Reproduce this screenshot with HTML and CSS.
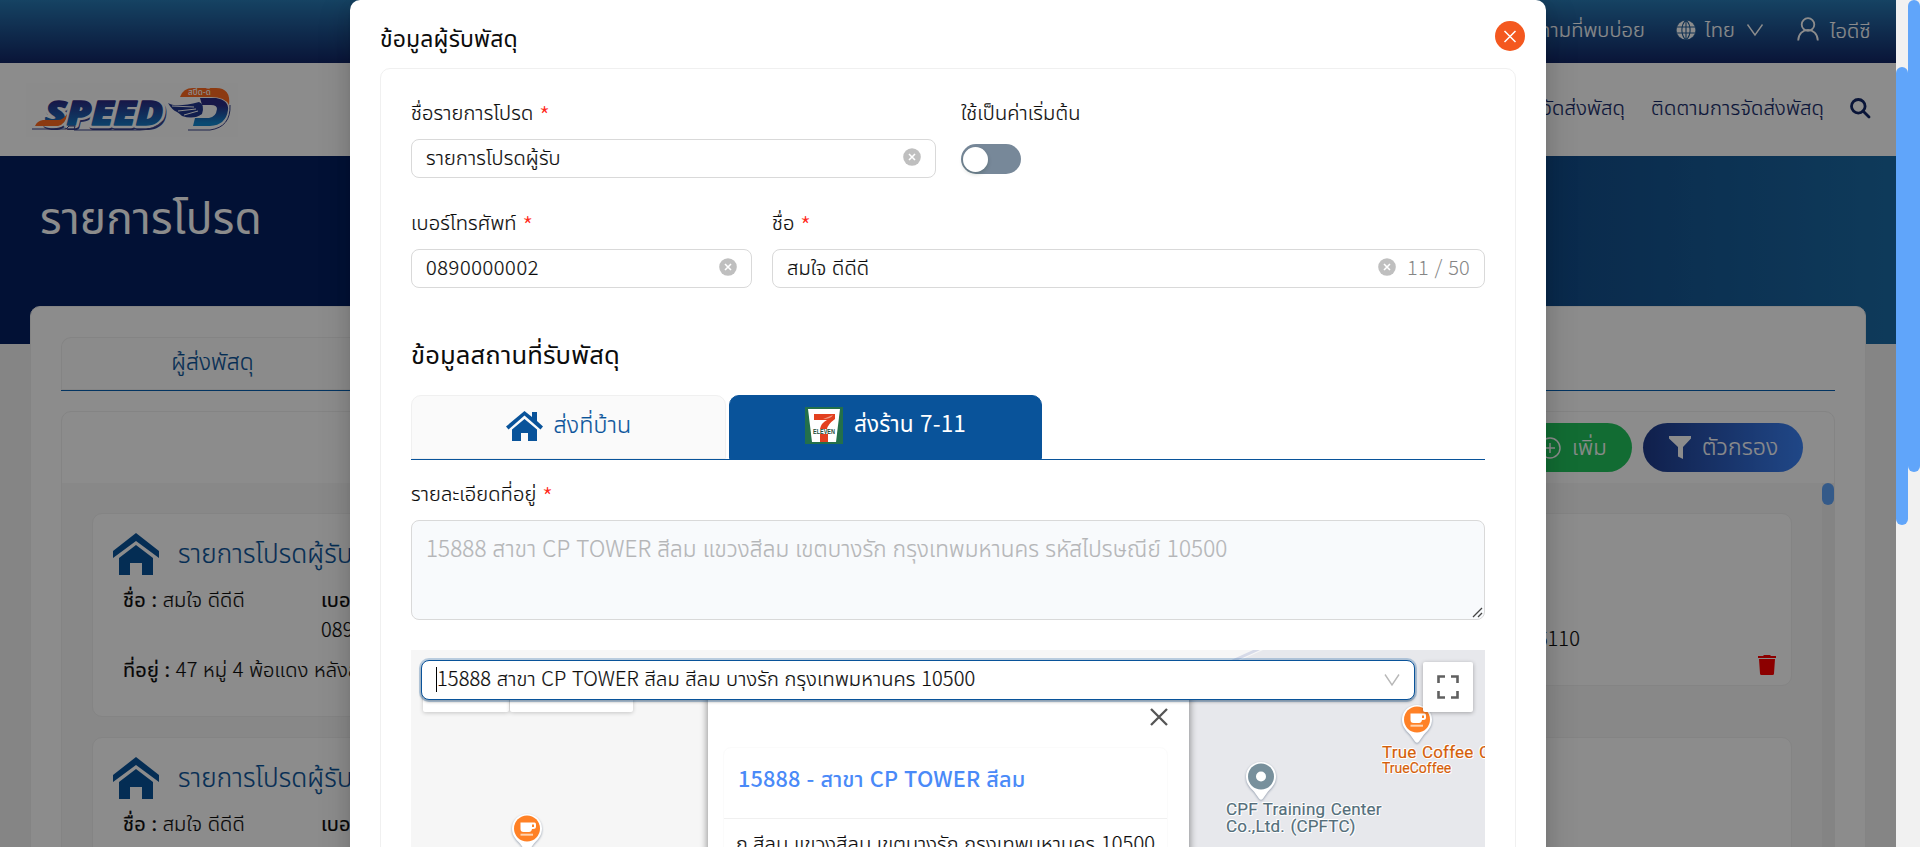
FILE: index.html
```
<!DOCTYPE html>
<html lang="th">
<head>
<meta charset="utf-8">
<title>รายการโปรด</title>
<link rel="stylesheet" href="styles.css">
</head>
<body>
<svg class="defs" aria-hidden="true">
  <defs>
    <linearGradient id="brand" x1="0" y1="0" x2="0" y2="1"><stop offset="0.25" stop-color="#2b2a83"/><stop offset="0.9" stop-color="#1287cf"/></linearGradient>
    <symbol id="home" viewBox="0 0 46 42"><path d="M23 0 46 18v7L23 8 0 25v-7z"/><path d="M23 12 40 25v17H29V30H17v12H6V25z"/></symbol>
    <symbol id="clear" viewBox="0 0 18 18"><circle cx="9" cy="9" r="8.8" fill="#bfbfbf"/><path d="m6 6 6 6M12 6l-6 6" stroke="#fff" stroke-width="1.6"/></symbol>
    <symbol id="pin" viewBox="0 0 32 42"><path d="M16 1C7.500 1 1 7.500 1 15.500 1 22 4.500 26 9 30.500l5 7q2 2.500 4 0l5-7C27.500 26 31 22 31 15.500 31 7.500 24.500 1 16 1z" fill="#fff"/></symbol>
    <symbol id="cup" viewBox="0 0 32 42"><use href="#pin"/><circle cx="16" cy="15.500" r="13" fill="#ff8126"/><path d="M9.500 9.500h14q1.500 0 1.500 2v2q0 2.500-3 2.500h-1q-.5 3-3 3h-5.500q-3 0-3-3z" fill="#fff"/><path d="M21 11.500h2v2.500h-2z" fill="#ff8126"/><path d="M9.500 20.700h12.500v2h-12.500z" fill="#ffd3b0"/></symbol>
  </defs>
</svg>

<div class="viewport">
  <div class="page">
    <div class="topbar">
      <span class="faq">คำถามที่พบบ่อย</span>
      <svg class="globe" viewBox="0 0 20 20"><circle cx="10" cy="10" r="10"/><path d="M0 7h20M0 13h20M10 0v20M10 0C4.500 5 4.500 15 10 20M10 0c5.500 5 5.500 15 0 20"/></svg>
      <span class="lang">ไทย</span>
      <svg class="chev" viewBox="0 0 16 12"><path d="m.5.5 7.500 10.500L15.500.5"/></svg>
      <svg class="user" viewBox="0 0 22 24"><circle cx="11" cy="7.500" r="6.300"/><path d="M1.200 23.500C1.500 9.500 20.500 9.500 20.800 23.500"/></svg>
      <span class="username">ไอดีซี</span>
    </div>
    <div class="header">
      <svg class="logo" viewBox="0 0 212 54">
        <rect width="212" height="54" fill="#fdfdfd"/>
        <g class="logo-text">
          <text x="20" y="43.500" textLength="118" lengthAdjust="spacingAndGlyphs" stroke="#37408a" stroke-width="6" fill="#37408a">SPEED</text>
          <text x="19" y="42" textLength="118" lengthAdjust="spacingAndGlyphs" stroke="#fff" stroke-width="6.500" fill="#fff">SPEED</text>
          <text x="19" y="42" textLength="118" lengthAdjust="spacingAndGlyphs" stroke="url(#brand)" stroke-width="1.500" fill="url(#brand)">SPEED</text>
        </g>
        <path d="M9 43q2-5 8-6h15q5 0 9-6-1 10-9 12z" fill="#ff6a1f"/>
        <path d="M6 46h34l3-3h6l-1 4h66q14 0 23-9" fill="none" stroke="#37408a" stroke-width="1"/>
        <path d="M154 14q3-9 13-9h23q15 0 13 17-4-8-18-8z" fill="#ff6a1f"/>
        <path d="M174 15h16q13 2 12 12-2 15-18 16h-17l2-8h14q7-1 8-9 0-4-6-4h-9z" fill="url(#brand)"/>
        <path d="M204 22q1 22-20 25h-22" fill="none" stroke="#37408a" stroke-width="1"/>
        <path d="M142 20q8 5 31-1 6 2 3 12-8 6-20 2-2-2-5-4-5-2-9-9z" fill="#22388f"/>
        <path d="m146 23 22 1M152 28l18-2M158 32l14-4" stroke="#fff" stroke-width="1"/>
        <text class="logo-sub" x="162" y="12">สปีด-ดี</text>
      </svg>
      <div class="nav"><span>บริการจัดส่งพัสดุ</span><span class="nav-track">ติดตามการจัดส่งพัสดุ</span>
        <svg class="search" viewBox="0 0 20 20"><circle cx="8.300" cy="8.300" r="6.800"/><path d="m13 13 6 6"/></svg></div>
    </div>
    <div class="banner"><h1>รายการโปรด</h1></div>
    <div class="panel">
      <div class="page-tabs"><div class="page-tab">ผู้ส่งพัสดุ</div></div>
      <div class="list">
        <div class="list-head">
          <div class="btn add"><svg class="plus" viewBox="0 0 22 22"><circle cx="11" cy="11" r="10"/><path d="M11 6v10M6 11h10"/></svg><span>เพิ่ม</span></div>
          <div class="btn filter"><svg class="funnel" viewBox="0 0 22 23"><path d="M0 0h22v2.500L14 11v12L9 20.500V11L0 2.500z"/></svg><span>ตัวกรอง</span></div>
        </div>
        <div class="list-body">
          <div class="cards">
            <div class="card tall">
              <div class="card-title"><svg><use href="#home"/></svg><span>รายการโปรดผู้รับ</span></div>
              <div class="card-row"><div><b>ชื่อ :</b> สมใจ ดีดีดี</div><div class="phone"><b>เบอร์โทรศัพท์ :</b><br>0890000001</div></div>
              <div class="card-address"><b>ที่อยู่ :</b> 47 หมู่ 4 พ้อแดง หลังสวน ชุมพร</div>
            </div>
            <div class="card side"><div class="zip">ชุมพร 86110</div>
              <svg class="trash" viewBox="0 0 18 20"><path d="M6 0h6l1 1h5v2H0V1h5zM1 4h16l-1 14.500q0 1.500-1.500 1.500h-11Q2 20 2 18.500z"/></svg></div>
            <div class="card next">
              <div class="card-title"><svg><use href="#home"/></svg><span>รายการโปรดผู้รับ</span></div>
              <div class="card-row"><div><b>ชื่อ :</b> สมใจ ดีดีดี</div><div class="phone"><b>เบอร์โทรศัพท์ :</b></div></div>
            </div>
            <div class="card next"></div>
          </div>
          <div class="mini-track"><div class="mini-thumb"></div></div>
        </div>
      </div>
    </div>
  </div>
  <div class="track modal-track"><div class="thumb"></div></div>
  <div class="track page-track"><div class="thumb"></div></div>

  <div class="mask">
    <div class="modal">
      <div class="modal-head"><h2>ข้อมูลผู้รับพัสดุ</h2>
        <svg class="close" viewBox="0 0 30 30"><circle cx="15" cy="15" r="15" fill="#f4581f"/><path d="m9.500 10 11 11M20.500 10l-11 11" stroke="#fff" stroke-width="1.500"/></svg></div>
      <div class="form">
        <div class="row first">
          <div class="field w-fav"><label>ชื่อรายการโปรด <i>*</i></label><div class="input"><span>รายการโปรดผู้รับ</span><svg class="clear"><use href="#clear"/></svg></div></div>
          <div class="field"><label>ใช้เป็นค่าเริ่มต้น</label><div class="switch"><div class="knob"></div></div></div>
        </div>
        <div class="row second">
          <div class="field w-phone"><label>เบอร์โทรศัพท์ <i>*</i></label><div class="input"><span class="digits">0890000002</span><svg class="clear"><use href="#clear"/></svg></div></div>
          <div class="field grow"><label>ชื่อ <i>*</i></label><div class="input"><span>สมใจ ดีดีดี</span><svg class="clear"><use href="#clear"/></svg><em>11 / 50</em></div></div>
        </div>
        <h3>ข้อมูลสถานที่รับพัสดุ</h3>
        <div class="tabs">
          <div class="tab"><svg class="tab-home" viewBox="0 0 37 30"><path d="M18.500 0 26 6V1h5v9l6 5.500-2.500 3L18.500 4.500 2.500 18.500 0 15.500z"/><path d="M18.500 8 31 18.500V30h-9v-8h-7v8H6V18.500z"/></svg><span>ส่งที่บ้าน</span></div>
          <div class="tab active">
            <svg class="seven" viewBox="0 0 38 37"><path fill="#23704a" d="M0 0h38v37H0z"/><path fill="#fff" d="M3 2h32l-4 33H7z"/><path fill="#e2401f" d="M9 7h21v5q-7 5-8 10h-7q1-6 7-9H9zM15 27h8v8h-8z"/><path fill="#f0a08c" d="M18 12q8 0 10-4"/><text x="8" y="26.500" textLength="22" lengthAdjust="spacingAndGlyphs">ELEVEN</text></svg>
            <span>ส่งร้าน 7-11</span></div>
        </div>
        <label class="addr-label">รายละเอียดที่อยู่ <i>*</i></label>
        <div class="textarea"><span>15888 สาขา CP TOWER สีลม แขวงสีลม เขตบางรัก กรุงเทพมหานคร รหัสไปรษณีย์ 10500</span>
          <svg class="grip" viewBox="0 0 10 10"><path d="M1 10 10 1M6 10l4-4"/></svg></div>
        <div class="map">
          <svg class="ground" viewBox="0 0 1074 197"><path d="M740 50 852 0h222v197H740z" fill="#e7e8ec"/><path d="M738 49 848-1" stroke="#d6dae8" stroke-width="3"/></svg>
          <div class="map-type"><span></span><span></span></div>
          <svg class="marker m1"><use href="#cup"/></svg>
          <svg class="marker m2"><use href="#cup"/></svg>
          <svg class="marker m3" viewBox="0 0 32 42"><use href="#pin"/><circle cx="16" cy="15.500" r="13" fill="#78909c"/><circle cx="16" cy="15.500" r="5" fill="#fff"/></svg>
          <div class="place coffee">True Coffee CP<small>TrueCoffee</small></div>
          <div class="place cpf">CPF Training Center<br>Co.,Ltd. (CPFTC)</div>
          <div class="info">
            <svg class="info-close" viewBox="0 0 18 18"><path d="m1 1 16 16M17 1 1 17"/></svg>
            <div class="info-card"><div class="info-title">15888 - สาขา CP TOWER สีลม</div><div class="info-text">ถ.สีลม แขวงสีลม เขตบางรัก กรุงเทพมหานคร 10500</div></div>
          </div>
          <div class="select"><span>15888 สาขา CP TOWER สีลม สีลม บางรัก กรุงเทพมหานคร 10500</span><svg viewBox="0 0 16 12"><path d="m1 .5 7 10.500L15 .5"/></svg></div>
          <div class="full"><svg viewBox="0 0 22 24"><path d="M1.500 8V1.500H8M14 1.500h6.500V8M20.500 16v6.500H14M8 22.500H1.500V16"/></svg></div>
        </div>
      </div>
    </div>
  </div>
</div>
</body>
</html>
```
FILE: styles.css
```
* { box-sizing: border-box; }
body { margin: 0; font-family: "Noto Sans CJK TC", "Noto Sans Thai", "Noto Sans", sans-serif; font-weight: 300; font-size: 20px; line-height: 30px; letter-spacing: .14px; word-spacing: 1px; color: #0c0c0c; -webkit-text-stroke: .2px; }
h1, h2, h3 { margin: 0; font-weight: 400; -webkit-text-stroke: 0; }
b { font-weight: 400; }
svg { display: block; flex: none; overflow: visible; }
.defs { position: absolute; width: 0; height: 0; }
.viewport { position: relative; width: 1920px; height: 847px; overflow: hidden; display: grid; grid-template-columns: 1896px 12px 12px; }

.page { height: 847px; overflow: hidden; background: #f2f2f2; }
.topbar { height: 63px; padding: 0 25px 4px 0; display: flex; align-items: center; justify-content: flex-end; color: #fff; background: linear-gradient(#287ab4, #122666); }
.faq { padding-bottom: 2px; white-space: nowrap; }
.globe { width: 20px; height: 20px; margin-left: 31px; fill: #fff; stroke: #1e5b96; stroke-width: 1.1; overflow: hidden; border-radius: 50%; }
.lang { width: 30px; margin: 0 0 2px 9px; white-space: nowrap; }
.chev { width: 16px; height: 12px; margin-left: 12px; fill: none; stroke: #fff; stroke-width: 1.4; }
.user { width: 22px; height: 24px; margin: 0 0 1px 34px; fill: none; stroke: #fff; stroke-width: 1.8; }
.username { width: 41px; margin: 0 0 0 11px; white-space: nowrap; }
.header { height: 93px; padding: 20px 25px 0 26px; display: flex; justify-content: space-between; background: #fff; }
.logo { width: 212px; height: 54px; -webkit-text-stroke: initial; }
.logo-text { font: italic 900 34px "Noto Sans", sans-serif; letter-spacing: 0; stroke-linejoin: round; }
.logo-sub { font: 500 8px "Noto Sans Thai", sans-serif; fill: #fff; }
.nav { height: 48px; display: flex; align-items: center; color: #122666; font-size: 20.2px; white-space: nowrap; }
.nav-track { margin-left: 26px; }
.search { width: 20px; height: 20px; margin: 1px 1px 0 26px; fill: none; stroke: #122666; stroke-width: 2.8; stroke-linecap: round; }
.banner { height: 188px; padding: 24px 40px; color: #fff; background: linear-gradient(90deg, #051f62 55%, #1b6ba5); }
.banner h1 { font-size: 44.2px; line-height: 70px; }
.panel { position: relative; width: 1836px; height: 600px; margin: -38px 0 0 30px; padding: 30px; border: 1px solid #f0f0f0; border-radius: 10px; background: #fff; }
.page-tabs { height: 54px; border-bottom: 1px solid #065fb1; }
.page-tab { width: 302px; height: 53px; padding-top: 8px; border: 1px solid #f0f0f0; border-right: 0; border-radius: 10px 0 0 0; text-align: center; color: #09539a; font-size: 22.7px; background: #fdfdfd; }
.list { height: 500px; margin-top: 20px; border: 1px solid #f0f0f0; border-radius: 10px; overflow: hidden; }
.list-head { height: 71px; padding: 11px 31px 0; display: flex; justify-content: flex-end; gap: 11px; }
.btn { height: 49px; display: flex; align-items: center; border-radius: 25px; color: #fff; font-size: 22px; white-space: nowrap; }
.btn span { padding-bottom: 6px; }
.add { width: 121px; padding-left: 28px; gap: 11px; background: #22c55e; }
.filter { width: 160px; padding-left: 26px; gap: 11px; background: linear-gradient(90deg, #1e3a8a, #3b82f6); }
.filter span { font-size: 23px; }
.plus { width: 22px; height: 22px; fill: none; stroke: #fff; stroke-width: 1.5; }
.funnel { width: 22px; height: 23px; fill: #fff; }
.list-body { height: 430px; display: flex; justify-content: space-between; background: #f8f8f8; }
.mini-track { width: 12px; background: #f1f1f1; }
.mini-thumb { height: 22px; border-radius: 6px; background: #60a5fa; }
.cards { width: 1700px; margin: 30px 0 0 30px; display: grid; grid-template-columns: 840px 840px; column-gap: 20px; grid-template-rows: 204px 204px; row-gap: 20px; align-items: start; }
.card { height: 204px; border: 1px solid #f0f0f0; border-radius: 10px; background: #fff; padding: 18px 20px 0; }
.side { height: 173px; position: relative; }
.zip { position: absolute; right: 211px; top: 109px; }
.trash { position: absolute; right: 15px; top: 141px; width: 18px; height: 20px; fill: #f00; }
.card-title { height: 43px; display: flex; align-items: center; gap: 19px; color: #09539a; font-size: 26px; }
.card-title svg { width: 46px; height: 42px; fill: #09539a; }
.card-title span { padding-bottom: 4px; }
.card-row { display: flex; padding: 9px 0 0 10px; }
.card-row > div:first-child { width: 198px; }
.phone { white-space: nowrap; }
.card-address { padding: 10px 0 0 10px; }

.track { background: #f1f1f1; }
.thumb { background: #60a5fa; border-radius: 6px; }
.modal-track { padding-top: 67px; }
.modal-track .thumb { height: 458px; }
.page-track .thumb { height: 472px; }

.mask { position: absolute; inset: 0 auto auto 0; width: 1896px; height: 847px; padding-left: 350px; background: rgba(0, 0, 0, .45); overflow: hidden; }
.modal { width: 1196px; height: 900px; padding: 0 30px; border-radius: 10px 10px 0 0; background: #fff; box-shadow: 0 6px 16px rgba(0, 0, 0, .08), 0 3px 6px -4px rgba(0, 0, 0, .12), 0 9px 28px 8px rgba(0, 0, 0, .1); }
.modal-head { height: 68px; padding-top: 21px; display: flex; justify-content: space-between; }
.modal-head h2 { margin-top: -1px; font-size: 23px; line-height: 34px; }
.close { width: 30px; height: 30px; margin-right: -9px; fill: none; }
.form { height: 832px; padding: 28px 30px 0; border: 1px solid #f0f0f0; border-radius: 10px 10px 0 0; }
.row { display: flex; }
.first { gap: 25px; height: 110px; }
.second { gap: 20px; height: 118px; }
.w-fav { width: 525px; }
.w-phone { width: 341px; }
.grow { flex: 1; }
label { display: block; height: 30px; white-space: nowrap; }
label i { display: inline-block; height: 20px; font-style: normal; font-size: 25px; line-height: 30px; vertical-align: -6px; color: #ff2a1a; -webkit-text-stroke: 0; }
.input { height: 39px; margin-top: 12px; padding: 0 14px 3px; display: flex; align-items: center; border: 1px solid #d9d9d9; border-radius: 8px; }
.input span { flex: 1; }
.digits { letter-spacing: .6px; }
.clear { width: 18px; height: 18px; margin: 0 0 1px; }
.input em { margin-left: 11px; font-style: normal; letter-spacing: .2px; color: #858585; -webkit-text-stroke: 0; }
.switch { width: 60px; height: 30px; margin-top: 17px; padding: 3px 2px; border-radius: 15px; background: #778899; }
.knob { width: 25px; height: 25px; border-radius: 50%; background: #fff; box-shadow: 0 2px 4px rgba(0, 35, 11, .2); }
h3 { height: 70px; padding-top: 11px; font-size: 25.6px; line-height: 34px; }
.tabs { height: 65px; display: flex; gap: 3px; border-bottom: 1px solid #09539a; }
.tab { width: 315px; height: 64px; display: flex; align-items: center; justify-content: center; gap: 11px; border: 1px solid #f0f0f0; border-radius: 10px 10px 0 0; background: #fafafa; color: #09539a; font-size: 23.2px; padding-bottom: 3px; }
.tab span { padding-bottom: 5px; }
.tab-home { width: 37px; height: 30px; fill: #09539a; }
.active { width: 313px; border-color: #09539a; background: #09539a; color: #fff; font-size: 22.6px; font-weight: 400; -webkit-text-stroke: 0; }
.seven { width: 38px; height: 37px; }
.seven text { font: 700 6.500px "Liberation Sans", sans-serif; letter-spacing: 0; fill: #234b36; }
.addr-label { margin-top: 18px; }
.textarea { position: relative; height: 100px; margin-top: 12px; padding: 11px 14px; border: 1px solid #d9d9d9; border-radius: 8px; background: #f8fafc; color: #b4b5b7; font-size: 22.4px; letter-spacing: .13px; }
.grip { position: absolute; right: 2px; bottom: 2px; width: 10px; height: 10px; fill: none; stroke: #444; stroke-width: 1.3; }

.map { position: relative; height: 210px; margin-top: 30px; overflow: hidden; background: #f6f6f6; }
.ground { width: 1074px; height: 197px; }
.map-type { position: absolute; left: 12px; top: 22px; display: flex; gap: 1px; }
.map-type span { width: 86px; height: 40px; background: #fff; border-radius: 2px; box-shadow: 0 1px 4px rgba(0, 0, 0, .2); }
.map-type span + span { width: 123px; }
.marker { position: absolute; width: 32px; height: 42px; filter: drop-shadow(0 1px 1px rgba(60, 80, 110, .5)); }
.m1 { left: 100px; top: 163px; }
.m2 { left: 990px; top: 54px; }
.m3 { left: 834px; top: 111px; }
.place { position: absolute; font: 400 17px/17px Roboto, sans-serif; letter-spacing: .2px; white-space: nowrap; text-shadow: 1px 0 #fff, -1px 0 #fff, 0 1px #fff, 0 -1px #fff, 1px 1px #fff, -1px -1px #fff; }
.coffee { left: 971px; top: 94px; color: #d55f0a; }
.coffee small { display: block; font-size: 14px; line-height: 14px; letter-spacing: 0; }
.cpf { left: 815px; top: 151px; color: #546e7a; }
.info { position: absolute; left: 297px; top: 30px; width: 481px; height: 250px; padding: 67px 21px 0 15px; background: #fff; box-shadow: 0 2px 7px 1px rgba(0, 0, 0, .4); }
.info-close { position: absolute; right: 21px; top: 28px; width: 18px; height: 18px; stroke: #555; stroke-width: 2.300; }
.info-card { border: 1px solid #fbfbfb; border-radius: 8px; white-space: nowrap; }
.info-title { height: 71px; padding: 13px 14px; border-bottom: 1px solid #f0f0f0; font-size: 21.7px; line-height: 34px; font-weight: 500; color: #4a8af8; -webkit-text-stroke: 0; }
.info-text { padding: 9px 12px; }
.select { position: absolute; left: 10px; top: 10px; width: 994px; height: 40px; padding: 0 14px; display: flex; align-items: center; justify-content: space-between; border: 1px solid #09539a; border-radius: 8px; background: #fff; box-shadow: 0 0 0 2px rgba(9, 83, 154, .25), 0 2px 3px rgba(0, 0, 0, .3); }
.select span { border-left: 1px solid #000; line-height: 22px; padding-bottom: 3px; margin-bottom: 2px; }
.select svg { width: 16px; height: 12px; fill: none; stroke: #b8b8b8; stroke-width: 1.4; }
.full { position: absolute; left: 1012px; top: 12px; width: 50px; height: 50px; display: grid; place-items: center; background: #fff; border-radius: 2px; box-shadow: 0 1px 4px rgba(0, 0, 0, .3); }
.full svg { width: 22px; height: 24px; fill: none; stroke: #606060; stroke-width: 2.6; }
```
